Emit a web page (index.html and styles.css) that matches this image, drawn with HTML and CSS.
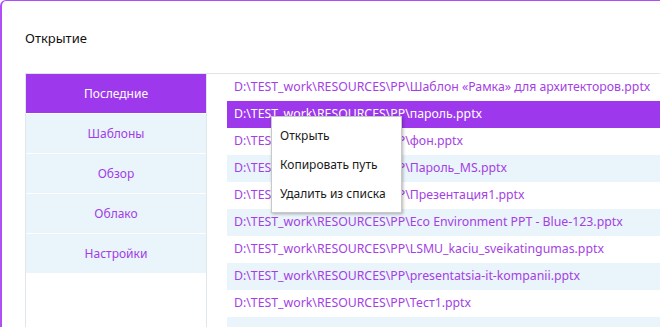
FILE: index.html
```html
<!DOCTYPE html>
<html lang="ru">
    <head>
        <meta charset="UTF-8" />
        <title>Открытие</title>
        <link rel="stylesheet" href="styles.css">
    </head>
    <body>
        <div class="window">
            <div class="title">Открытие</div>
            <div class="panel">
                <!-- Left navigation -->
                <div class="sidebar">
                    <div class="nav-item active">Последние</div>
                    <div class="nav-item">Шаблоны</div>
                    <div class="nav-item">Обзор</div>
                    <div class="nav-item">Облако</div>
                    <div class="nav-item">Настройки</div>
                </div>

                <!-- Recent files -->
                <div class="file-list">
                    <div class="row">D:\TEST_work\RESOURCES\PP\Шаблон «Рамка» для архитекторов.pptx</div>
                    <div class="row selected">D:\TEST_work\RESOURCES\PP\пароль.pptx</div>
                    <div class="row">D:\TEST_work\RESOURCES\PP\фон.pptx</div>
                    <div class="row alt">D:\TEST_work\RESOURCES\PP\Пароль_MS.pptx</div>
                    <div class="row">D:\TEST_work\RESOURCES\PP\Презентация1.pptx</div>
                    <div class="row alt">D:\TEST_work\RESOURCES\PP\Eco Environment PPT - Blue-123.pptx</div>
                    <div class="row">D:\TEST_work\RESOURCES\PP\LSMU_kaciu_sveikatingumas.pptx</div>
                    <div class="row alt">D:\TEST_work\RESOURCES\PP\presentatsia-it-kompanii.pptx</div>
                    <div class="row">D:\TEST_work\RESOURCES\PP\Тест1.pptx</div>
                    <div class="row alt"></div>
                </div>
            </div>

            <div class="context-menu">
                <div class="menu-item">Открыть</div>
                <div class="menu-item">Копировать путь</div>
                <div class="menu-item">Удалить из списка</div>
            </div>
        </div>
    </body>
</html>
```

FILE: styles.css
```css
html, body {
    margin: 0;
    padding: 0;
    height: 100%;
    overflow: hidden;
}
body {
    font-family: "Noto Sans", "Open Sans", sans-serif;
    font-size: 12px;
    background: white;
}
.window {
    position: relative;
    height: 100%;
    box-sizing: border-box;
    border-top: 1px solid #b04ef6;
    border-left: 2px solid #b04ef6;
    border-top-left-radius: 6px;
    overflow: hidden;
}
.title {
    padding: 28px 0 0 23px;
    height: 44px;
    font-size: 13px;
    color: #111;
}
.panel {
    display: flex;
    margin-left: 23px;
    height: 260px;
    border-top: 1px solid #e1e5e9;
}
.sidebar {
    width: 180px;
    flex-shrink: 0;
    border-left: 1px solid #dfe6ec;
    border-right: 1px solid #dfe6ec;
}
.nav-item {
    height: 39px;
    line-height: 39px;
    text-align: center;
    background: #e9f4fb;
    color: #a13de6;
    border-bottom: 1px solid white;
}
.nav-item.active {
    background: #9e38ec;
    color: white;
}
.file-list {
    flex: 1;
    padding-left: 20px;
    overflow: hidden;
}
.row {
    height: 27px;
    line-height: 26px;
    padding-left: 7px;
    font-size: 12.3px;
    color: #a43fe4;
    white-space: nowrap;
}
.row.alt {
    background: #e9f4fb;
}
.row.selected {
    background: #9e38ec;
    color: white;
}
.context-menu {
    position: absolute;
    left: 269px;
    top: 115px;
    width: 129px;
    padding: 4px 0;
    background: white;
    border: 1px solid #c9c9c9;
    box-shadow: 1px 1px 3px rgba(0,0,0,0.3);
}
.menu-item {
    height: 29px;
    line-height: 29px;
    padding-left: 8px;
    color: #1a1a1a;
}
```
